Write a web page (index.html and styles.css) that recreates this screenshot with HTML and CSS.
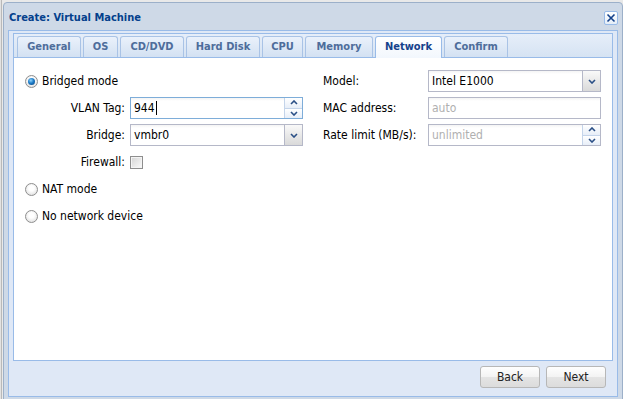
FILE: index.html
```html
<!DOCTYPE html>
<html>
  <head>
    <meta charset='UTF-8'>
    <title>Create: Virtual Machine</title>
    <link rel="stylesheet" href="styles.css">
  </head>
  <body>
    <div class='win'>
      <div class='win__header'>
        <span class='win__title'>Create: Virtual Machine</span>
        <span class='win__close'>
          <svg width='10' height='10' viewBox='0 0 10 10'><path d='M1.5 1.5 L8.5 8.5 M8.5 1.5 L1.5 8.5' stroke='#15428b' stroke-width='1.6' fill='none'/></svg>
        </span>
      </div>
      <div class='win__body'>
        <div class='tabs'>
          <div class='tabs__bar'>
            <div class='tab'>General</div>
            <div class='tab'>OS</div>
            <div class='tab'>CD/DVD</div>
            <div class='tab'>Hard Disk</div>
            <div class='tab'>CPU</div>
            <div class='tab'>Memory</div>
            <div class='tab tab--active'>Network</div>
            <div class='tab'>Confirm</div>
          </div>
          <div class='tabs__body'>
            <div class='col'>
              <div class='row'>
                <span class='radio radio--checked'></span>
                <span class='radio__label'>Bridged mode</span>
              </div>
              <div class='row'>
                <label class='field__label field__label--right'>VLAN Tag:</label>
                <div class='input input--focus'>
                  <span class='input__text'>944<span class='caret'></span></span>
                  <span class='spin'>
                    <span class='spin__half'><svg width='8' height='5' viewBox='0 0 8 5'><path d='M1 4 L4 1 L7 4' stroke='#2a4f86' stroke-width='1.6' fill='none'/></svg></span>
                    <span class='spin__half'><svg width='8' height='5' viewBox='0 0 8 5'><path d='M1 1 L4 4 L7 1' stroke='#2a4f86' stroke-width='1.6' fill='none'/></svg></span>
                  </span>
                </div>
              </div>
              <div class='row'>
                <label class='field__label field__label--right'>Bridge:</label>
                <div class='input'>
                  <span class='input__text'>vmbr0</span>
                  <span class='trigger'>
                    <svg width='8' height='5' viewBox='0 0 8 5'><path d='M1 1 L4 4 L7 1' stroke='#2a4f86' stroke-width='1.6' fill='none'/></svg>
                  </span>
                </div>
              </div>
              <div class='row'>
                <label class='field__label field__label--right'>Firewall:</label>
                <span class='checkbox'></span>
              </div>
              <div class='row'>
                <span class='radio'></span>
                <span class='radio__label'>NAT mode</span>
              </div>
              <div class='row'>
                <span class='radio'></span>
                <span class='radio__label'>No network device</span>
              </div>
            </div>
            <div class='col'>
              <div class='row'>
                <label class='field__label'>Model:</label>
                <div class='input'>
                  <span class='input__text'>Intel E1000</span>
                  <span class='trigger'>
                    <svg width='8' height='5' viewBox='0 0 8 5'><path d='M1 1 L4 4 L7 1' stroke='#2a4f86' stroke-width='1.6' fill='none'/></svg>
                  </span>
                </div>
              </div>
              <div class='row'>
                <label class='field__label'>MAC address:</label>
                <div class='input'>
                  <span class='input__text input__text--empty'>auto</span>
                </div>
              </div>
              <div class='row'>
                <label class='field__label'>Rate limit (MB/s):</label>
                <div class='input'>
                  <span class='input__text input__text--empty'>unlimited</span>
                  <span class='spin'>
                    <span class='spin__half'><svg width='8' height='5' viewBox='0 0 8 5'><path d='M1 4 L4 1 L7 4' stroke='#2a4f86' stroke-width='1.6' fill='none'/></svg></span>
                    <span class='spin__half'><svg width='8' height='5' viewBox='0 0 8 5'><path d='M1 1 L4 4 L7 1' stroke='#2a4f86' stroke-width='1.6' fill='none'/></svg></span>
                  </span>
                </div>
              </div>
            </div>
          </div>
        </div>
        <div class='toolbar'>
          <div class='btn'>Back</div>
          <div class='btn'>Next</div>
        </div>
      </div>
    </div>
  </body>
</html>
```

FILE: styles.css
```css
html,
body {
	margin: 0;
}

body {
	height: 399px;
	overflow: hidden;
	background: linear-gradient(to right, #e2e2e2 0, #e2e2e2 1px, #b9b9b9 1px, #b9b9b9 2px, #e9e9e9 2px);
	font-family: 'DejaVu Sans Condensed', 'DejaVu Sans', sans-serif;
	font-size: 12px;
	color: #000;
}

.win {
	box-sizing: border-box;
	width: 620px;
	height: 400px;
	margin: 2px 0 0 3px;
	border: 1px solid #9cb0c9;
	border-radius: 4px 4px 0 0;
	background: #ced9e7;
	display: flex;
	flex-direction: column;
}

  .win__header {
  	height: 27px;
  	padding: 0 4px 0 5px;
  	display: flex;
  	align-items: center;
  	justify-content: space-between;
  }

  .win__title {
  	font-size: 11px;
  	font-weight: bold;
  	color: #04408c;
  	margin-top: 1px;
  }

  .win__close {
  	box-sizing: border-box;
  	width: 14px;
  	height: 14px;
  	margin-top: 2px;
  	border: 1px solid #99bbe8;
  	border-radius: 2px;
  	background: linear-gradient(#ffffff, #e4edf8);
  	display: flex;
  	align-items: center;
  	justify-content: center;
  }

  .win__body {
  	flex: 1;
  	margin: 0 4px 4px 4px;
  	padding: 2px 4px 0 4px;
  	border: 1px solid #99bbe8;
  	background: #dfe8f6;
  	display: flex;
  	flex-direction: column;
  }

    .tabs {
    	height: 326px;
    	border: 1px solid #99bbe8;
    	display: flex;
    	flex-direction: column;
    }

    .tabs__bar {
    	display: flex;
    	gap: 2px;
    	padding: 2px 0 0 3px;
    	border-bottom: 1px solid #99bbe8;
    	background: linear-gradient(#e6eef9, #d6e3f3);
    }

    .tab {
    	box-sizing: border-box;
    	height: 21px;
    	margin-bottom: -1px;
    	border: 1px solid #a9c3e6;
    	border-bottom: none;
    	border-radius: 3px 3px 0 0;
    	background: linear-gradient(#eaf1fb, #d3e1f2);
    	font-size: 11px;
    	font-weight: bold;
    	line-height: 20px;
    	color: #4e6d9b;
    	text-align: center;
    	white-space: nowrap;
    }

    .tab:nth-child(1) { width: 64px; }
    .tab:nth-child(2) { width: 35px; }
    .tab:nth-child(3) { width: 64px; }
    .tab:nth-child(4) { width: 74px; }
    .tab:nth-child(5) { width: 41px; }
    .tab:nth-child(6) { width: 68px; }
    .tab:nth-child(7) { width: 67px; }
    .tab:nth-child(8) { width: 64px; }

    .tab--active {
    	height: 22px;
    	border-color: #99bbe8;
    	background: linear-gradient(#ffffff, #f2f7fd);
    	color: #15428b;
    }

    .tabs__body {
    	flex: 1;
    	background: #fff;
    	padding: 12px 11px 0 11px;
    	display: grid;
    	grid-template-columns: 278px 278px;
    	column-gap: 20px;
    	align-content: start;
    }

      .col {
      	display: flex;
      	flex-direction: column;
      	gap: 5px;
      }

      .row {
      	height: 22px;
      	display: flex;
      	align-items: center;
      }

      .radio {
      	box-sizing: border-box;
      	width: 13px;
      	height: 13px;
      	border: 1px solid #8e8e8e;
      	border-radius: 50%;
      	background: radial-gradient(circle at 50% 40%, #ffffff 30%, #d6d6d6 100%);
      	display: flex;
      	align-items: center;
      	justify-content: center;
      }

      .radio--checked::after {
      	content: '';
      	width: 7px;
      	height: 7px;
      	border-radius: 50%;
      	background: radial-gradient(circle at 40% 35%, #8fd3fb 0%, #1d7cc8 45%, #0b3f78 100%);
      }

      .radio__label {
      	margin-left: 4px;
      }

      .field__label {
      	box-sizing: border-box;
      	width: 105px;
      	flex: none;
      	padding-right: 5px;
      }

      .field__label--right {
      	text-align: right;
      }

      .input {
      	box-sizing: border-box;
      	flex: 1;
      	height: 22px;
      	border: 1px solid #b5b8c8;
      	background: linear-gradient(#f4f4f4, #ffffff 3px);
      	display: flex;
      }

      .input--focus {
      	border-color: #7eadd9;
      }

      .input__text {
      	flex: 1;
      	padding-left: 3px;
      	line-height: 20px;
      	white-space: nowrap;
      }

      .input__text--empty {
      	color: #b0b0b0;
      }

      .caret {
      	display: inline-block;
      	width: 1px;
      	height: 14px;
      	margin-left: 1px;
      	vertical-align: -3px;
      	background: #000;
      }

      .trigger {
      	width: 17px;
      	border-left: 1px solid #b5b8c8;
      	background: linear-gradient(#f9f9f9, #e9e9e9 50%, #dadada);
      	display: flex;
      	align-items: center;
      	justify-content: center;
      }

      .spin {
      	width: 17px;
      	border-left: 1px solid #c4d4ea;
      	display: flex;
      	flex-direction: column;
      }

      .spin__half {
      	flex: 1;
      	display: flex;
      	align-items: center;
      	justify-content: center;
      	background: linear-gradient(#ffffff, #e7eef8);
      }

      .spin__half + .spin__half {
      	border-top: 1px solid #c4d4ea;
      }

      .checkbox {
      	box-sizing: border-box;
      	width: 13px;
      	height: 13px;
      	border: 1px solid #8e8e8e;
      	box-shadow: inset 0 0 0 1px #f4f4f4;
      	background: linear-gradient(135deg, #d4d4d4, #fbfbfb);
      }

    .toolbar {
    	flex: 1;
    	display: flex;
    	justify-content: flex-end;
    	align-items: flex-start;
    	gap: 6px;
    	padding: 5px 7px 0 0;
    }

    .btn {
    	box-sizing: border-box;
    	width: 60px;
    	height: 22px;
    	border: 1px solid #b7b7b7;
    	border-radius: 3px;
    	background: linear-gradient(#fefefe, #f3f3f3 50%, #e4e4e4 51%, #dcdcdc);
    	text-align: center;
    	line-height: 20px;
    	color: #222;
    }
```
